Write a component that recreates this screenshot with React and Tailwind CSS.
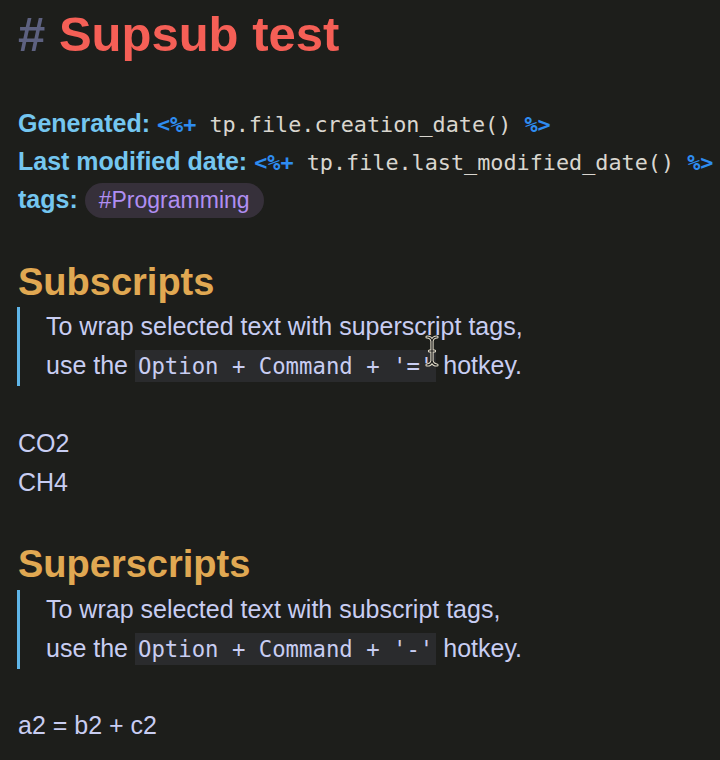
import React from "react";

function Cursor() {
  return (
    <svg className="absolute left-[404px] top-[28px]" width="16" height="32" viewBox="0 0 16 32">
      <path d="M3 2 Q7 2 8 6 Q9 2 13 2 M8 6 V26 M3 30 Q7 30 8 26 Q9 30 13 30 M5.5 16 H10.5" fill="none" stroke="#e8e2cf" strokeWidth="3.2" strokeLinecap="round" />
      <path d="M3 2 Q7 2 8 6 Q9 2 13 2 M8 6 V26 M3 30 Q7 30 8 26 Q9 30 13 30 M5.5 16 H10.5" fill="none" stroke="#1a1a1a" strokeWidth="1.2" strokeLinecap="round" />
    </svg>
  );
}

function Code({ children }) {
  return (
    <span className="font-['DejaVu_Sans_Mono',monospace] text-[22.3px] bg-[#2a2b2d] px-[3px] py-[3px]">{children}</span>
  );
}

function Meta({ label, code }) {
  return (
    <div className="h-[38px] leading-[38px] whitespace-nowrap">
      <span className="font-bold text-[#74c6f0]">{label}</span>{" "}
      <span className="font-['DejaVu_Sans_Mono',monospace] text-[21.8px]">
        <span className="font-bold text-[#2e8cf0]">&lt;%+</span>
        <span className="text-[#d9d6cf]"> {code} </span>
        <span className="font-bold text-[#2e8cf0]">%&gt;</span>
      </span>
    </div>
  );
}

export default function App() {
  return (
    <div className="w-[720px] h-[760px] overflow-hidden bg-[#1d1e1b] pl-[18px] pt-[4px] font-['Liberation_Sans',Arial,sans-serif] text-[25px] text-[#c8cdf2]">
      <h1 className="text-[49px] leading-[60px] font-bold whitespace-nowrap">
        <span className="text-[#5d6180]"># </span>
        <span className="text-[#f55f56]">Supsub test</span>
      </h1>

      <div className="mt-[40px]">
        <Meta label="Generated:" code="tp.file.creation_date()" />
        <Meta label="Last modified date:" code="tp.file.last_modified_date()" />
        <div className="h-[40px] flex items-center whitespace-nowrap">
          <span className="font-bold text-[#74c6f0]">tags:</span>
          <span className="ml-[7px] h-[35px] px-[14px] rounded-full bg-[#36303a] text-[#b08ef2] text-[23px] flex items-center">#Programming</span>
        </div>
      </div>

      <h2 className="mt-[39px] text-[38px] leading-[46px] font-bold text-[#e0a852]">Subscripts</h2>
      <div className="relative mt-[2px] ml-[-1px] border-l-[3px] border-[#5fb5e8] pl-[26px] leading-[39px] whitespace-nowrap">
        <div>To wrap selected text with superscript tags,</div>
        <div>use the <Code>Option + Command + '='</Code> hotkey.</div>
        <Cursor />
      </div>

      <div className="mt-[38px] leading-[39px]">
        <div>CO2</div>
        <div>CH4</div>
      </div>

      <h2 className="mt-[39px] text-[38px] leading-[46px] font-bold text-[#e0a852]">Superscripts</h2>
      <div className="mt-[3px] ml-[-1px] border-l-[3px] border-[#5fb5e8] pl-[26px] leading-[39px] whitespace-nowrap">
        <div>To wrap selected text with subscript tags,</div>
        <div>use the <Code>Option + Command + '-'</Code> hotkey.</div>
      </div>

      <div className="mt-[37px] leading-[39px]">a2 = b2 + c2</div>
    </div>
  );
}
